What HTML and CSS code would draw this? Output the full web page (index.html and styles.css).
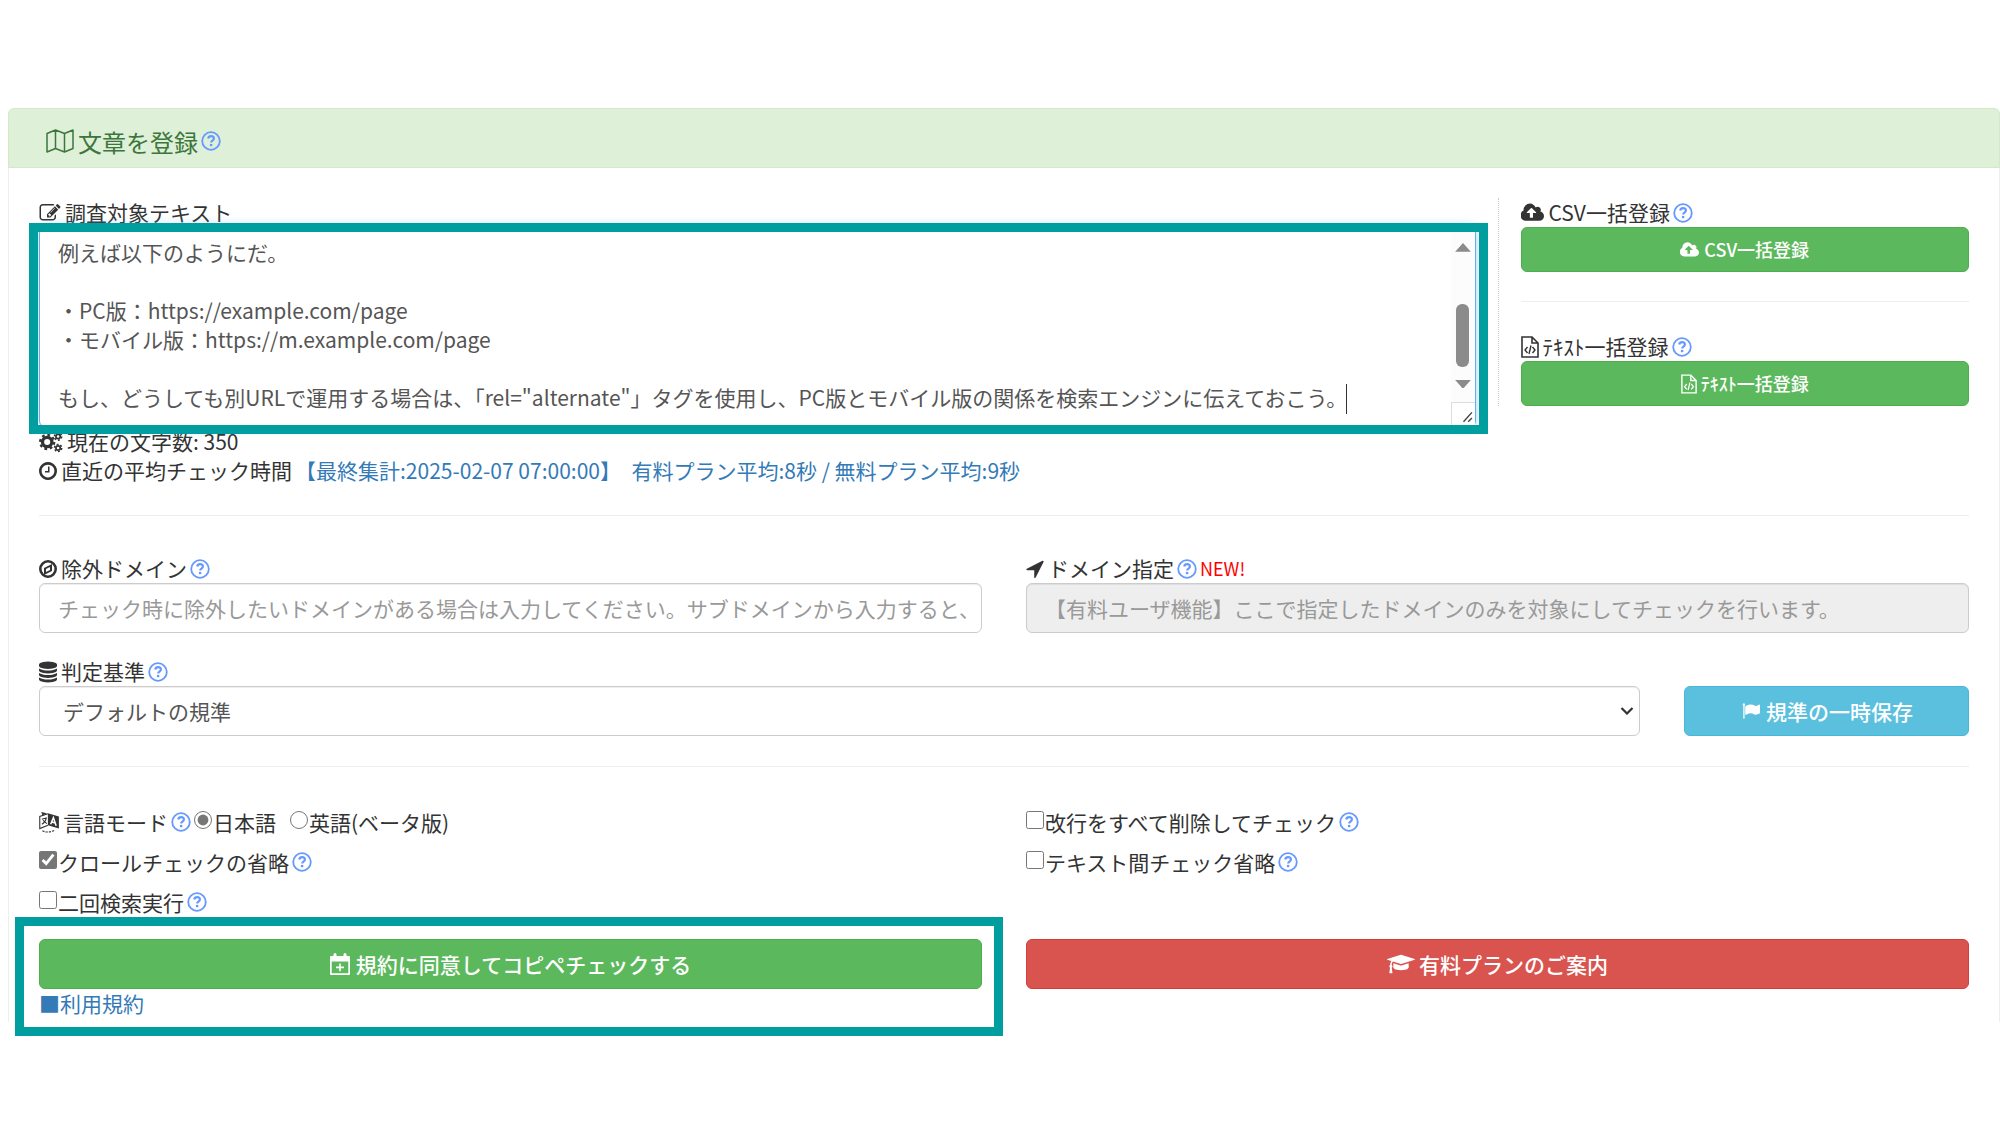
FILE: index.html
```html
<!DOCTYPE html>
<html lang="ja">
<head>
<meta charset="utf-8">
<title>文章を登録</title>
<link rel="stylesheet" href="styles.css">
</head>
<body>
<svg class="sprite" aria-hidden="true">
  <symbol id="help" viewBox="0 0 20 20"><g fill="none" stroke="currentColor"><circle cx="10" cy="10" r="8.8" stroke-width="1.8"/><path d="M7.2 7.6C7.6 5.8 8.6 5.2 10 5.2c1.700 0 2.900 1 2.900 2.400 0 2-2.700 2-2.700 3.900" stroke-width="2.200"/><path d="M10.100 12.900v2.300" stroke-width="2.400"/></g></symbol>
  <symbol id="cloud" viewBox="0 0 1920 1792"><path d="M1216 864q0-14-9-23l-352-352q-9-9-23-9t-23 9l-351 351q-10 12-10 24 0 14 9 23t23 9h224v352q0 13 9.500 22.500t22.500 9.500h192q13 0 22.500-9.500t9.500-22.500v-352h224q13 0 22.500-9.500t9.500-22.500zm640 288q0 159-112.500 271.500t-271.500 112.500h-1088q-185 0-316.500-131.500t-131.500-316.500q0-130 70-240t188-165q-2-30-2-43 0-212 150-362t362-150q156 0 285.500 87t188.500 231q71-62 166-62 106 0 181 75t75 181q0 76-41 138 130 31 213.500 135.500t83.500 238.500z"/></symbol>
  <symbol id="clock" viewBox="128 128 1536 1536"><path d="M1024 544v448q0 14-9 23t-23 9h-320q-14 0-23-9t-9-23v-64q0-14 9-23t23-9h224v-352q0-14 9-23t23-9h64q14 0 23 9t9 23zm416 352q0-148-73-273t-198-198-273-73-273 73-198 198-73 273 73 273 198 198 273 73 273-73 198-198 73-273zm224 0q0 209-103 385.500t-279.500 279.500-385.500 103-385.500-103-279.500-279.500-103-385.500 103-385.500 279.500-279.500 385.500-103 385.500 103 279.500 279.500 103 385.500z"/></symbol>
  <symbol id="compass" viewBox="0 0 18 18"><circle cx="9" cy="9" r="7.700" fill="none" stroke="currentColor" stroke-width="2.600"/><path fill-rule="evenodd" d="M13 4v7l-8 4V8zM11 7L7 9v3l4-2z"/></symbol>
  <symbol id="database" viewBox="128 0 1536 1792"><path d="M896 768q237 0 443-43t325-127v170q0 69-103 128t-280 93.500-385 34.500-385-34.500-280-93.500-103-128v-170q119 84 325 127t443 43zm0 768q237 0 443-43t325-127v170q0 69-103 128t-280 93.500-385 34.500-385-34.500-280-93.500-103-128v-170q119 84 325 127t443 43zm0-384q237 0 443-43t325-127v170q0 69-103 128t-280 93.500-385 34.500-385-34.500-280-93.500-103-128v-170q119 84 325 127t443 43zm0-1152q208 0 385 34.500t280 93.500 103 128v128q0 69-103 128t-280 93.500-385 34.500-385-34.500-280-93.500-103-128v-128q0-69 103-128t280-93.500 385-34.500z"/></symbol>
  <symbol id="arrow" viewBox="192 192 1408 1472"><path d="M1593 349l-640 1280q-17 35-57 35-5 0-15-2-22-5-35.500-22.500t-13.500-39.500v-576h-576q-22 0-39.500-13.500t-22.500-35.500 4-42 29-30l1280-640q13-7 29-7 27 0 45 19 15 14 18.500 34.500t-6.500 39.500z"/></symbol>
  <symbol id="cap" viewBox="0 0 2304 1792"><path d="M1774 836l18 316q4 69-82 128t-235 93.500-323 34.500-323-34.500-235-93.500-82-128l18-316 574 181q22 7 48 7t48-7zm530-324q0 23-22 31l-1120 352q-4 1-10 1t-10-1l-652-206q-43 34-71 111.500t-34 178.500q63 36 63 109 0 69-58 107l58 433q2 14-8 25-9 11-24 11h-192q-15 0-24-11-10-11-8-25l58-433q-58-38-58-107 0-73 65-111 11-207 98-330l-333-104q-22-8-22-31t22-31l1120-352q4-1 10-1t10 1l1120 352q22 8 22 31z"/></symbol>
  <symbol id="flag" viewBox="0 0 1792 1792"><path d="M320 256q0 72-64 110v1266q0 13-9.500 22.500t-22.500 9.500h-64q-13 0-22.500-9.500t-9.500-22.500v-1266q-64-38-64-110 0-53 37.500-90.500t90.500-37.500 90.500 37.500 37.500 90.500zm1472 64v763q0 25-12.500 38.500t-39.500 27.500q-215 116-369 116-61 0-123.500-22t-108.500-48-115.500-48-142.500-22q-192 0-464 146-17 9-33 9-26 0-45-19t-19-45v-742q0-32 31-55 21-14 79-43 236-120 421-120 107 0 200 29t219 88q38 19 88 19 54 0 117.500-21t110-47 88-47 54.500-21q26 0 45 19t19 45z"/></symbol>
  <symbol id="edit" viewBox="0 128 1792 1536"><path d="M888 1184l116-116-152-152-116 116v56h96v96h56zm440-720q-16-16-33 1l-350 350q-17 17-1 33t33-1l350-350q17-17 1-33zm80 594v190q0 119-84.500 203.500t-203.500 84.500h-832q-119 0-203.500-84.500t-84.500-203.500v-832q0-119 84.500-203.500t203.500-84.500h832q63 0 117 25 15 7 18 23 3 17-9 29l-49 49q-14 14-32 8-23-6-45-6h-832q-66 0-113 47t-47 113v832q0 66 47 113t113 47h832q66 0 113-47t47-113v-126q0-13 9-22l64-64q15-15 35-7t20 29zm-96-738l288 288-672 672h-288v-288zm444 132l-92 92-288-288 92-92q28-28 68-28t68 28l152 152q28 28 28 68t-28 68z"/></symbol>
  <symbol id="cogs" viewBox="0 0 22 20"><g fill="none" stroke="currentColor"><circle cx="7.500" cy="10" r="4.300" stroke-width="3"/><circle cx="7.500" cy="10" r="6.500" stroke-width="2" stroke-dasharray="2.550 2.550"/><circle cx="17.500" cy="5" r="2" stroke-width="1.600"/><circle cx="17.500" cy="5" r="3.300" stroke-width="1.400" stroke-dasharray="1.730 1.730"/><circle cx="17.500" cy="15.500" r="2" stroke-width="1.600"/><circle cx="17.500" cy="15.500" r="3.300" stroke-width="1.400" stroke-dasharray="1.730 1.730"/></g></symbol>
  <symbol id="map" viewBox="0 0 28 24"><path fill="none" stroke="currentColor" stroke-width="1.500" stroke-linejoin="round" d="M1 4.500L9.500 1l9 3.500L27 1v18.500L18.500 23l-9-3.500L1 23zM9.500 1v18.500M18.500 4.500V23"/></symbol>
  <symbol id="file" viewBox="0 0 18 22"><g fill="none" stroke="currentColor" stroke-width="1.600"><path d="M1 1h10l6 6v14H1zM11 1v6h6"/><path stroke-width="1.400" d="M6.500 11L4 14l2.500 3M11.500 11l2.500 3-2.500 3M10 9.500L8 18"/></g></symbol>
  <symbol id="calendar" viewBox="0 0 20 22"><path fill-rule="evenodd" d="M0 4q0-1 1-1h2.500V1.500Q3.500 0 5 0t1.500 1.500V3h7V1.500Q13.500 0 15 0t1.500 1.500V3H19q1 0 1 1v17q0 1-1 1H1q-1 0-1-1zM1.700 8.500v11.800h16.600V8.500z"/><path d="M9.200 10.500h1.600v3.100H14v1.600h-3.200v3.100H9.200v-3.100H6v-1.600h3.200z"/></symbol>
  <symbol id="language" viewBox="0 0 18 20"><path d="M8 2l10 3v11L8 13z"/><path fill="none" stroke="#fff" stroke-width="1.400" d="M10.500 12L13 6l2.500 7.500M11.500 10l3.200 1"/><path fill="none" stroke="currentColor" stroke-width="1" d="M8 2.500L.600 5v11L8 13M2.500 7.500l4-1.200Q6 10 2.500 12M3.500 8.500l3.500 3"/><path d="M2 1l5 1-4 2z"/><path fill="none" stroke="currentColor" stroke-dasharray="2 1" d="M3 18q5 2.500 11-.500"/></symbol>
</svg>

<main class="panel">
  <h1 class="panel-heading"><svg class="icon map"><use href="#map"/></svg>文章を登録<svg class="icon help"><use href="#help"/></svg></h1>
  <form class="panel-body">
    <div class="row row-text">
      <div class="col">
        <label class="line" for="text"><svg class="icon wide"><use href="#edit"/></svg>調査対象テキスト</label>
        <div class="editor">
          <textarea id="text" class="control" spellcheck="false">例えば以下のようにだ。

・PC版：https://example.com/page
・モバイル版：https://m.example.com/page

もし、どうしても別URLで運用する場合は、「rel="alternate"」タグを使用し、PC版とモバイル版の関係を検索エンジンに伝えておこう。</textarea>
          <span class="caret"></span>
          <div class="scrollbar" aria-hidden="true">
            <svg class="scroll-arrow" viewBox="0 0 16 9"><path d="M0 9L8 0l8 9z"/></svg>
            <span class="thumb"></span>
            <svg class="scroll-arrow" viewBox="0 0 16 9"><path d="M0 0l8 9 8-9z"/></svg>
            <svg class="grip" viewBox="0 0 24 24"><path d="M12 20l9-10M17 20l4-4" fill="none" stroke="#444" stroke-width="1.500"/></svg>
          </div>
          <div class="mark mark-editor"></div>
        </div>
        <p class="line"><svg class="icon cogs"><use href="#cogs"/></svg>現在の文字数: 350</p>
        <p class="line"><svg class="icon"><use href="#clock"/></svg>直近の平均チェック時間<a class="stats" href="#">【最終集計:2025-02-07 07:00:00】&ensp;有料プラン平均:8秒 / 無料プラン平均:9秒</a></p>
      </div>
      <div class="col bulk">
        <p class="line"><svg class="icon cloud"><use href="#cloud"/></svg>CSV一括登録<svg class="icon help"><use href="#help"/></svg></p>
        <button type="button" class="btn btn-success btn-small"><svg class="icon"><use href="#cloud"/></svg>CSV一括登録</button>
        <hr>
        <p class="line"><svg class="icon file"><use href="#file"/></svg>ﾃｷｽﾄ一括登録<svg class="icon help"><use href="#help"/></svg></p>
        <button type="button" class="btn btn-success btn-small"><svg class="icon file"><use href="#file"/></svg>ﾃｷｽﾄ一括登録</button>
      </div>
    </div>
    <hr>
    <div class="row row-domain">
      <div class="col">
        <label class="line" for="exclude"><svg class="icon"><use href="#compass"/></svg>除外ドメイン<svg class="icon help"><use href="#help"/></svg></label>
        <input id="exclude" class="control" type="text" placeholder="チェック時に除外したいドメインがある場合は入力してください。サブドメインから入力すると、">
      </div>
      <div class="col">
        <label class="line" for="domain"><svg class="icon"><use href="#arrow"/></svg>ドメイン指定<svg class="icon help"><use href="#help"/></svg><span class="new">NEW!</span></label>
        <input id="domain" class="control" type="text" disabled placeholder="【有料ユーザ機能】ここで指定したドメインのみを対象にしてチェックを行います。">
      </div>
    </div>
    <div class="row row-rule">
      <div class="col">
        <label class="line" for="rule"><svg class="icon tall"><use href="#database"/></svg>判定基準<svg class="icon help"><use href="#help"/></svg></label>
        <div class="select">
          <select id="rule" class="control"><option>デフォルトの規準</option></select>
          <svg class="chevron" viewBox="0 0 14 8"><path d="M1.500 1L7 6.500 12.500 1" fill="none" stroke="#333" stroke-width="2.200"/></svg>
        </div>
      </div>
      <div class="col">
        <button type="button" class="btn btn-info"><svg class="icon wide"><use href="#flag"/></svg>規準の一時保存</button>
      </div>
    </div>
    <hr>
    <div class="row row-options">
      <div class="col">
        <div class="option"><svg class="icon language"><use href="#language"/></svg>言語モード<svg class="icon help"><use href="#help"/></svg>
          <label class="choice"><input type="radio" name="lang" checked>日本語</label>
          <label class="choice english"><input type="radio" name="lang">英語(ベータ版)</label>
        </div>
        <div class="option"><label class="choice"><input type="checkbox" checked>クロールチェックの省略</label><svg class="icon help"><use href="#help"/></svg></div>
        <div class="option"><label class="choice"><input type="checkbox">二回検索実行</label><svg class="icon help"><use href="#help"/></svg></div>
      </div>
      <div class="col">
        <div class="option"><label class="choice"><input type="checkbox">改行をすべて削除してチェック</label><svg class="icon help"><use href="#help"/></svg></div>
        <div class="option"><label class="choice"><input type="checkbox">テキスト間チェック省略</label><svg class="icon help"><use href="#help"/></svg></div>
      </div>
    </div>
    <div class="row row-submit">
      <div class="col">
        <div class="submit">
          <button type="submit" class="btn btn-success"><svg class="icon calendar"><use href="#calendar"/></svg>規約に同意してコピペチェックする</button>
          <a class="line" href="#">■利用規約</a>
          <div class="mark mark-submit"></div>
        </div>
      </div>
      <div class="col">
        <button type="button" class="btn btn-danger"><svg class="icon cap"><use href="#cap"/></svg>有料プランのご案内</button>
      </div>
    </div>
  </form>
</main>
</body>
</html>
```
FILE: styles.css
```css
* { box-sizing: border-box; }

body {
  margin: 0;
  padding: 108px 0 100px 8px;
  background: #fff;
  color: #333;
  font-family: "Noto Sans CJK JP", sans-serif;
  font-size: 21px;
  line-height: 29px;
}

p, h1 { margin: 0; }
a { color: #337ab7; text-decoration: none; }
hr { width: 100%; margin: 30px 0; border: 0; border-top: 1px solid #eee; }
button, input, select, textarea { font: inherit; }

.sprite { position: absolute; width: 0; height: 0; }

.icon { flex: none; width: 18px; height: 18px; margin-right: 4px; fill: currentColor; }
.icon.wide { width: 22px; }
.icon.tall { height: 22px; }
.icon.cogs { width: 24px; height: 22px; }
.icon.cloud { width: 24px; height: 22px; }
.icon.file { width: 18px; height: 24px; }
.icon.map { width: 28px; height: 24px; }
.icon.language { width: 20px; height: 22px; }
.icon.calendar { width: 20px; height: 22px; margin-right: 6px; }
.icon.cap { width: 28px; height: 22px; }
.icon.help { width: 20px; height: 20px; margin: 0 3px; color: #6699ff; }

.panel {
  border: 1px solid #eee;
  border-top: 0;
  border-bottom: 0;
  border-radius: 6px 6px 0 0;
}
.panel-heading {
  display: flex;
  align-items: center;
  height: 60px;
  margin: 0 -1px;
  padding: 6px 37px 0;
  border: 1px solid #d6e9c6;
  border-radius: 6px 6px 0 0;
  background: #dff0d8;
  color: #3c763d;
  font-size: 24px;
  font-weight: 400;
}
.panel-body { padding: 30px 30px 4px; }

.row { display: grid; margin: 0 -22px; }
.row-text { grid-template-columns: 3fr 1fr; align-items: start; }
.row-domain, .row-options, .row-submit { grid-template-columns: 1fr 1fr; }
.row-domain { padding: 8px 0 24px; }
.row-rule { grid-template-columns: 5fr 1fr; align-items: end; }
.row-options { padding: 10px 0 22px; }
.col { min-width: 0; padding: 0 22px; }
.bulk { border-left: 1px dotted #ccc; }
.bulk hr { margin: 29px 0 30px; }

.line { display: flex; align-items: center; height: 29px; white-space: nowrap; }
.stats { margin-left: 3px; }
.new { color: #f00; font-size: 18px; }

.control {
  display: block;
  width: 100%;
  height: 50px;
  padding: 0 0 0 18px;
  border: 1px solid #ccc;
  border-radius: 6px;
  background: #fff;
  box-shadow: inset 0 1px 1px rgba(0, 0, 0, .075);
  color: #555;
}
.control::placeholder { color: #999; opacity: 1; }
.control:disabled { background: #eee; }

.editor { position: relative; }
textarea.control {
  height: 200px;
  padding: 10px 26px 0 18px;
  border-color: #66afe9;
  box-shadow: 0 0 12px rgba(102, 175, 233, .6);
  line-height: 29px;
  resize: none;
  overflow: hidden;
}
.caret { position: absolute; top: 157px; left: 1307px; width: 1px; height: 30px; background: #333; }
.scrollbar {
  position: absolute;
  top: 1px;
  right: 1px;
  bottom: 1px;
  display: flex;
  flex-direction: column;
  align-items: center;
  width: 24px;
  padding-top: 15px;
  background: #fcfcfc;
}
.scroll-arrow { width: 16px; height: 9px; fill: #8b8b8b; }
.thumb { width: 13px; height: 64px; margin: 52px 0 13px; border-radius: 6px; background: #8b8b8b; }
.grip { width: 24px; height: 24px; margin-top: 14px; border: 1px solid #ddd; border-width: 1px 0 0 1px; background: #fff; }

.mark { position: absolute; border: 9px solid #009e9f; pointer-events: none; }
.mark-editor { inset: -4px -12px -7px -10px; }

.select { position: relative; }
select.control { padding-left: 23px; appearance: none; }
.chevron { position: absolute; top: 21px; right: 6px; width: 14px; height: 8px; }

.btn {
  display: flex;
  align-items: center;
  justify-content: center;
  width: 100%;
  height: 50px;
  padding: 0;
  border: 1px solid;
  border-radius: 6px;
  color: #fff;
  font-weight: 500;
}
.btn-small { height: 45px; font-size: 18px; }
.btn-small .icon { width: 20px; height: 18px; }
.btn-small .icon.file { width: 16px; height: 20px; }
.btn-success { border-color: #4cae4c; background: #5cb85c; }
.btn-info { border-color: #46b8da; background: #5bc0de; }
.btn-danger { border-color: #d43f3a; background: #d9534f; }

.option { display: flex; align-items: center; height: 30px; margin-bottom: 10px; white-space: nowrap; }
.option:last-child { margin-bottom: 0; }
.choice { display: flex; align-items: center; }
.choice input { width: 18px; height: 18px; margin: 0 1px 4px 0; accent-color: #767676; }
.english { margin-left: 14px; }

.submit { position: relative; }
.mark-submit { inset: -22px -21px -18px -24px; }
```
